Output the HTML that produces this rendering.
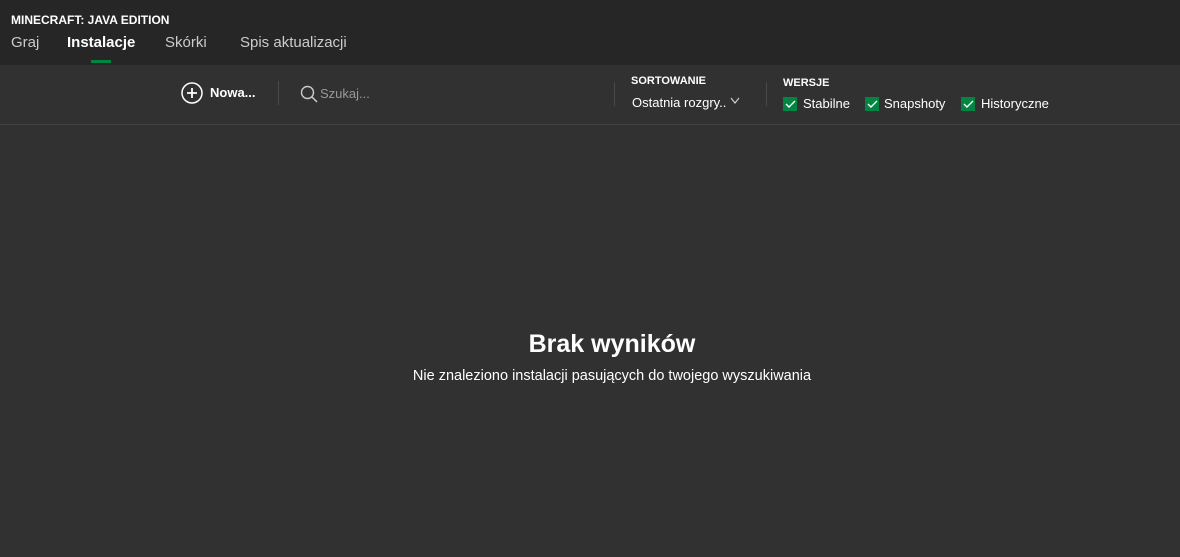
<!DOCTYPE html>
<html><head><style>
*{margin:0;padding:0;box-sizing:border-box}
body{width:1180px;height:557px;background:#313131;font-family:"Liberation Sans",sans-serif;color:#fff;position:relative;overflow:hidden}
.hdr{position:absolute;left:0;top:0;width:1180px;height:65px;background:#262626}
.t{position:absolute;font-size:12px;font-weight:bold;left:11px;top:13px}
.tab{position:absolute;top:34px;font-size:15px;color:#ccc}
.bar{position:absolute;left:0;top:124px;width:1180px;height:1px;background:#444}
.sep{position:absolute;width:1px;background:#4a4a4a}
.cb{position:absolute;top:97px;width:14px;height:14px;background:#008542}
.lbl{position:absolute;font-size:13px}
</style></head><body>
<div class="hdr">
<div class="t">MINECRAFT: JAVA EDITION</div>
<div class="tab" style="left:11px">Graj</div>
<div class="tab" style="left:67px;color:#fff;font-weight:bold">Instalacje</div>
<div class="tab" style="left:165px">Skórki</div>
<div class="tab" style="left:240px">Spis aktualizacji</div>
<div style="position:absolute;left:91px;top:60px;width:20px;height:3px;background:#008542"></div>
</div>
<svg style="position:absolute;left:181px;top:82px" width="22" height="22"><circle cx="11" cy="11" r="10" fill="none" stroke="#fff" stroke-width="1.5"/><path d="M11 6v10M6 11h10" stroke="#fff" stroke-width="1.8"/></svg>
<div class="lbl" style="left:210px;top:85px;font-weight:bold">Nowa...</div>
<div class="sep" style="left:278px;top:81px;height:24px"></div>
<svg style="position:absolute;left:300px;top:85px" width="18" height="18"><circle cx="7.5" cy="7.5" r="6" fill="none" stroke="#ccc" stroke-width="1.4"/><path d="M12 12l5 5" stroke="#ccc" stroke-width="1.5"/></svg>
<div class="lbl" style="left:320px;top:86px;color:#999">Szukaj...</div>
<div class="sep" style="left:614px;top:82px;height:24px"></div>
<div class="lbl" style="left:631px;top:75px;font-size:11px;font-weight:bold">SORTOWANIE</div>
<div class="lbl" style="left:632px;top:95px">Ostatnia rozgry..</div>
<svg style="position:absolute;left:730px;top:97px" width="10" height="8"><path d="M1 1l4 5 4-5" fill="none" stroke="#ccc" stroke-width="1.2"/></svg>
<div class="sep" style="left:766px;top:82px;height:24px"></div>
<div class="lbl" style="left:783px;top:77px;font-size:11px;font-weight:bold">WERSJE</div>
<div class="cb" style="left:783px"></div><div class="lbl" style="left:803px;top:96px">Stabilne</div>
<div class="cb" style="left:865px"></div><div class="lbl" style="left:884px;top:96px">Snapshoty</div>
<div class="cb" style="left:961px"></div><div class="lbl" style="left:981px;top:96px">Historyczne</div>
<svg style="position:absolute;left:0;top:0" width="1180" height="130"><g fill="none" stroke="#fff" stroke-width="1.4"><path d="M786 104l3 3 6-6M868 104l3 3 6-6M964 104l3 3 6-6"/></g></svg>
<div class="bar"></div>
<div style="position:absolute;left:0;width:1224px;top:330px;text-align:center;font-size:25px;font-weight:bold">Brak wyników</div>
<div style="position:absolute;left:0;width:1224px;top:368px;text-align:center;font-size:14.5px">Nie znaleziono instalacji pasujących do twojego wyszukiwania</div>
</body></html>
